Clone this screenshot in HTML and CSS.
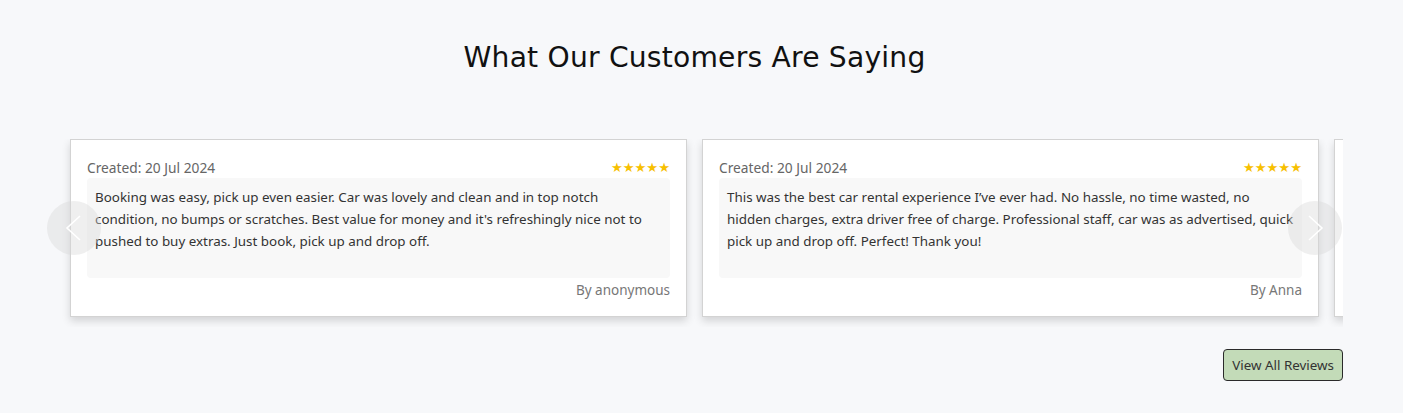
FILE: index.html
```html
<!DOCTYPE html>
<html lang="en">
<head>
<meta charset="utf-8">
<title>Reviews</title>
<link rel="stylesheet" href="styles.css">
</head>
<body>
<section class="reviews">
  <h2 class="reviews-title">What Our Customers Are Saying</h2>
  <div class="carousel">
    <div class="track">
      <article class="card">
        <div class="card-head">
          <span class="date">Created: 20 Jul 2024</span>
          <span class="stars">★★★★★</span>
        </div>
        <p class="card-text">Booking was easy, pick up even easier. Car was lovely and clean and in top notch condition, no bumps or scratches. Best value for money and it's refreshingly nice not to pushed to buy extras. Just book, pick up and drop off.</p>
        <div class="author">By anonymous</div>
      </article>
      <article class="card">
        <div class="card-head">
          <span class="date">Created: 20 Jul 2024</span>
          <span class="stars">★★★★★</span>
        </div>
        <p class="card-text">This was the best car rental experience I’ve ever had. No hassle, no time wasted, no hidden charges, extra driver free of charge. Professional staff, car was as advertised, quick pick up and drop off. Perfect! Thank you!</p>
        <div class="author">By Anna</div>
      </article>
      <article class="card card-peek" aria-hidden="true"></article>
    </div>
    <button class="arrow arrow-prev" aria-label="Previous">
      <svg viewBox="0 0 54 54" width="54" height="54"><path d="M33 15 L20 27 L33 39" fill="none" stroke="#fff" stroke-width="1.6"/></svg>
    </button>
    <button class="arrow arrow-next" aria-label="Next">
      <svg viewBox="0 0 54 54" width="54" height="54"><path d="M21 15 L34 27 L21 39" fill="none" stroke="#fff" stroke-width="1.6"/></svg>
    </button>
  </div>
  <div class="actions">
    <a class="btn" href="#">View All Reviews</a>
  </div>
</section>
</body>
</html>
```

FILE: styles.css
```css
* { box-sizing: border-box; }
html, body { margin: 0; padding: 0; }
body {
  background: #f7f8fa;
  font-family: "Noto Sans", sans-serif;
  color: #333;
}
.reviews {
  padding-top: 38px;
}
.reviews-title {
  margin: 0;
  padding-right: 14px;
  text-align: center;
  font-family: "DejaVu Sans", sans-serif;
  font-weight: 400;
  font-size: 28.2px;
  line-height: 40px;
  color: #111;
  letter-spacing: 0.2px;
}
.carousel {
  position: relative;
  margin: 61px 60px 0 60px;
}
.track {
  display: flex;
  gap: 15px;
  overflow: hidden;
  padding: 0 0 10px 10px;
}
.card {
  flex: 0 0 617px;
  height: 178px;
  background: #fff;
  border: 1px solid #d3d3d3;
  box-shadow: 0 4px 8px rgba(0,0,0,0.15);
  padding: 17px 16px 16px 16px;
  display: flex;
  flex-direction: column;
}
.card-head {
  display: flex;
  justify-content: space-between;
  align-items: center;
  height: 21px;
}
.date {
  font-size: 13.75px;
  color: #666;
}
.stars {
  color: #f7c000;
  font-family: "DejaVu Sans", sans-serif;
  font-size: 13.2px;
  letter-spacing: 0;
}
.card-text {
  margin: 0;
  background: #f8f8f8;
  border-radius: 4px;
  padding: 8px 6px 8px 8px;
  height: 100px;
  font-size: 13.4px;
  line-height: 22px;
  color: #333;
}
.author {
  margin-top: 2px;
  text-align: right;
  font-size: 13.5px;
  line-height: 20px;
  color: #777;
}
.arrow {
  position: absolute;
  top: 62px;
  width: 54px;
  height: 54px;
  border: none;
  border-radius: 50%;
  background: rgba(215,215,215,0.4);
  padding: 0;
  display: flex;
  align-items: center;
  justify-content: center;
  cursor: pointer;
}
.arrow-prev { left: -13px; }
.arrow-next { right: 1px; }
.actions {
  display: flex;
  justify-content: flex-end;
  margin: 22px 60px 0 0;
}
.btn {
  display: inline-block;
  background: #c3dbb8;
  border: 1px solid #2a2a2a;
  border-radius: 4px;
  padding: 0 8px;
  height: 32px;
  line-height: 30px;
  font-size: 13.4px;
  color: #333;
  text-decoration: none;
}
```
